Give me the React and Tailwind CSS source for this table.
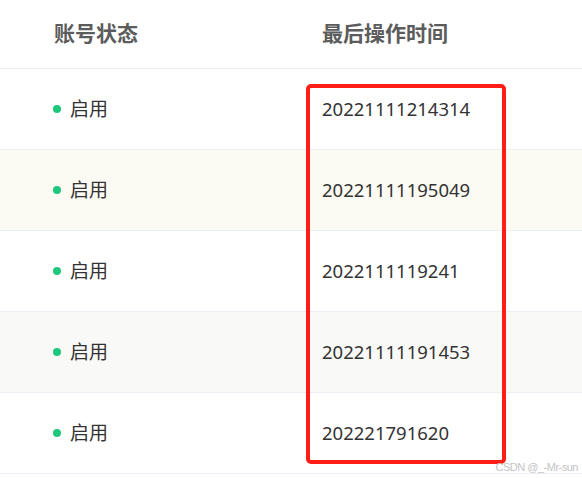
import React from 'react';

const rows = [
  { time: '20221111214314', bg: 'bg-white' },
  { time: '20221111195049', bg: 'bg-[#fbfaf3]' },
  { time: '2022111119241', bg: 'bg-white' },
  { time: '20221111191453', bg: 'bg-[#f9f9f7]' },
  { time: '202221791620', bg: 'bg-white' },
];

const font = { fontFamily: '"Noto Sans", "Noto Sans CJK SC", sans-serif' };

export default function App() {
  return (
    <div className="relative w-[582px] h-[478px] bg-white overflow-hidden" style={font}>
      {/* header */}
      <div className="flex items-center h-[69px] border-b border-[#ebeef5]">
        <div className="w-[322px] pl-[54px] text-[21px] font-bold text-[#5c5c5c]">账号状态</div>
        <div className="text-[21px] font-bold text-[#5c5c5c]">最后操作时间</div>
      </div>

      {rows.map((r, i) => (
        <div key={i} className={`flex items-center h-[81px] border-b border-[#ebeef5] ${r.bg}`}>
          <div className="w-[322px] pl-[53px] flex items-center gap-[9px]">
            <span className="w-[8px] h-[8px] rounded-full bg-[#1ec77c]" />
            <span className="text-[19px] text-[#333]">启用</span>
          </div>
          <div className="text-[18.5px] text-[#333]">{r.time}</div>
        </div>
      ))}

      {/* red highlight box */}
      <div className="absolute left-[306px] top-[84px] w-[200px] h-[380px] border-[4px] border-[#ff1d15] rounded-[5px]" />

      {/* watermark */}
      <div className="absolute right-[4px] top-[459px] text-[11px] tracking-[-0.5px] text-[#c4c4c4]" style={{ fontFamily: '"Liberation Sans", sans-serif' }}>
        CSDN @_-Mr-sun
      </div>
    </div>
  );
}
